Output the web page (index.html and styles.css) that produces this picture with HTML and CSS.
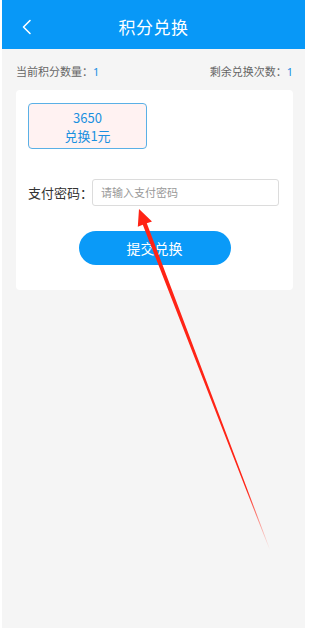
FILE: index.html
```html
<!DOCTYPE html>
<html lang="zh">
<head>
<meta charset="utf-8">
<title>积分兑换</title>
<link rel="stylesheet" href="styles.css">
</head>
<body>
<div class="page">
  <header class="topbar">
    <svg class="back" width="12" height="16" viewBox="0 0 12 16"><path d="M9 1.5 L2.5 8 L9 14.5" fill="none" stroke="#fff" stroke-width="1.6" stroke-linecap="round" stroke-linejoin="round"/></svg>
    <h1 class="title">积分兑换</h1>
  </header>
  <div class="info">
    <span>当前积分数量：<b>1</b></span>
    <span>剩余兑换次数：<b>1</b></span>
  </div>
  <section class="card">
    <div class="option">
      <div class="opt-line">3650</div>
      <div class="opt-line">兑换1元</div>
    </div>
    <div class="pwd-row">
      <label class="pwd-label">支付密码：</label>
      <div class="pwd-input">请输入支付密码</div>
    </div>
    <div class="btn-wrap"><button class="submit">提交兑换</button></div>
  </section>
  <svg class="annot" width="307" height="630" viewBox="0 0 307 630">
    <defs>
      <linearGradient id="fade" gradientUnits="userSpaceOnUse" x1="139" y1="209" x2="270" y2="550">
        <stop offset="0" stop-color="#ff2416" stop-opacity="1"/>
        <stop offset="0.82" stop-color="#ff2416" stop-opacity="1"/>
        <stop offset="1" stop-color="#ff2416" stop-opacity="0"/>
      </linearGradient>
    </defs>
    <polygon fill="url(#fade)" points="139,209 152,221.5 146.8,223.3 270.3,550 269.7,550.2 142.8,224.8 137.8,226.8"/>
  </svg>
</div>
</body>
</html>
```
FILE: styles.css
```css
* { box-sizing: border-box; }
html, body { margin: 0; padding: 0; background: #fff; }
body {
  font-family: "Noto Sans CJK SC", "Noto Sans", sans-serif;
  width: 307px;
  height: 630px;
  padding: 0 2px 2px;
  overflow: hidden;
}
.page {
  position: relative;
  height: 628px;
  background: #f5f5f5;
}
.topbar {
  height: 49px;
  background: #0898f7;
  display: flex;
  align-items: center;
  justify-content: center;
  position: relative;
  padding-top: 3px;
}
.back {
  position: absolute;
  left: 19px;
  top: 19px;
}
.title {
  margin: 0;
  font-size: 17px;
  font-weight: 400;
  color: #fff;
  letter-spacing: 0.5px;
  line-height: 1;
}
.info {
  display: flex;
  justify-content: space-between;
  padding: 14px 12px 0 14px;
  height: 41px;
  font-size: 11px;
  line-height: 16px;
  color: #666;
}
.info b { font-weight: 400; color: #1a8fe3; font-family: "Noto Sans", sans-serif; }
.card {
  margin: 0 12px 0 14px;
  height: 200px;
  background: #fff;
  border-radius: 4px;
  padding: 13px 12px 0 12px;
}
.option {
  width: 119px;
  height: 46px;
  border: 1px solid #5ab0e6;
  border-radius: 4px;
  background: #fff2f2;
  color: #1a90e0;
  font-size: 13px;
  text-align: center;
  padding-top: 5px;
}
.opt-line {
  height: 18px;
  line-height: 18px;
}
.pwd-row {
  display: flex;
  align-items: center;
  margin-top: 30px;
}
.pwd-label {
  font-size: 13px;
  color: #333;
  width: 64px;
  flex: none;
  white-space: nowrap;
}
.pwd-input {
  width: 187px;
  flex: none;
  height: 27px;
  border: 1px solid #dcdcdc;
  border-radius: 3px;
  font-size: 11px;
  color: #999;
  line-height: 25px;
  padding-left: 8px;
}
.btn-wrap {
  display: flex;
  justify-content: center;
  margin-top: 25px;
}
.submit {
  width: 152px;
  height: 34px;
  border: 0;
  border-radius: 17px;
  background: #0a9af8;
  color: #fff;
  font-family: "Noto Sans CJK SC", "Noto Sans", sans-serif;
  font-size: 14px;
  padding: 0;
}
.annot {
  position: absolute;
  left: -2px;
  top: 0;
  pointer-events: none;
}
```
